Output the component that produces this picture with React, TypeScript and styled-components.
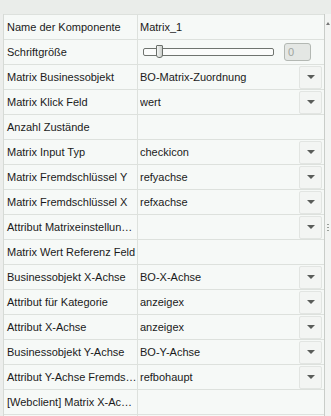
import styled, { createGlobalStyle } from 'styled-components';

const GlobalStyle = createGlobalStyle`
  html, body {
    margin: 0;
    padding: 0;
    background: #eceeec;
    overflow: hidden;
  }
  body {
    font-family: "Liberation Sans", Arial, sans-serif;
    font-size: 11px;
    color: #1a1a1a;
  }
`;

type Row = {
  label: string;
  value?: string;
  kind?: 'text' | 'select' | 'slider' | 'empty';
};

const rows: Row[] = [
  { label: 'Name der Komponente', value: 'Matrix_1', kind: 'text' },
  { label: 'Schriftgröße', kind: 'slider' },
  { label: 'Matrix Businessobjekt', value: 'BO-Matrix-Zuordnung', kind: 'select' },
  { label: 'Matrix Klick Feld', value: 'wert', kind: 'select' },
  { label: 'Anzahl Zustände', kind: 'empty' },
  { label: 'Matrix Input Typ', value: 'checkicon', kind: 'select' },
  { label: 'Matrix Fremdschlüssel Y', value: 'refyachse', kind: 'select' },
  { label: 'Matrix Fremdschlüssel X', value: 'refxachse', kind: 'select' },
  { label: 'Attribut Matrixeinstellun…', value: '', kind: 'select' },
  { label: 'Matrix Wert Referenz Feld', kind: 'empty' },
  { label: 'Businessobjekt X-Achse', value: 'BO-X-Achse', kind: 'select' },
  { label: 'Attribut für Kategorie', value: 'anzeigex', kind: 'select' },
  { label: 'Attribut X-Achse', value: 'anzeigex', kind: 'select' },
  { label: 'Businessobjekt Y-Achse', value: 'BO-Y-Achse', kind: 'select' },
  { label: 'Attribut Y-Achse Fremds…', value: 'refbohaupt', kind: 'select' },
  { label: '[Webclient] Matrix X-Ac…', kind: 'empty' },
  { label: '', kind: 'empty' },
];

const Page = styled.div`
  display: flex;
  width: 331px;
  height: 416px;
  overflow: hidden;
`;

const Main = styled.div`
  flex: 1;
  display: flex;
  flex-direction: column;
`;

const TopBand = styled.div`
  height: 14px;
  flex: none;
  background: #eaedea;
`;

const Table = styled.div`
  margin-left: 3px;
  border-left: 1px solid #d6dad6;
  background: #f6f9f7;
`;

const PropRow = styled.div`
  display: grid;
  grid-template-columns: 134px 1fr;
  height: 25px;
  border-top: 1px solid #dde1dd;
  box-sizing: border-box;
`;

const Label = styled.div`
  display: flex;
  align-items: center;
  padding-left: 3px;
  border-right: 1px solid #dde1dd;
  white-space: nowrap;
  overflow: hidden;
  min-width: 0;
`;

const Value = styled.div`
  display: flex;
  align-items: center;
  padding-left: 2px;
  padding-right: 2px;
  min-width: 0;
  gap: 4px;
`;

const ValueText = styled.span`
  flex: 1;
  white-space: nowrap;
  overflow: hidden;
`;

const DropButton = styled.div`
  flex: none;
  width: 21px;
  height: 21px;
  display: flex;
  align-items: center;
  justify-content: center;
  background: #f3f5f3;
  border: 1px solid #e2e5e2;
  border-radius: 2px;
`;

const Arrow = styled.div`
  width: 0;
  height: 0;
  border-left: 4px solid transparent;
  border-right: 4px solid transparent;
  border-top: 4px solid #5a5d5a;
`;

const SliderWrap = styled.div`
  flex: 1;
  display: flex;
  align-items: center;
  padding-left: 3px;
  gap: 10px;
`;

const Track = styled.div`
  position: relative;
  width: 129px;
  height: 6px;
  border: 1px solid #6f746f;
  border-radius: 2px;
  background: #fbfcfb;
`;

const Thumb = styled.div`
  position: absolute;
  left: 12px;
  top: -4px;
  width: 5px;
  height: 11px;
  border: 1px solid #6a6f6a;
  border-radius: 1px 1px 3px 3px;
  background: linear-gradient(to right, #f4f6f4, #c9cdc9);
`;

const NumBox = styled.div`
  width: 27px;
  height: 18px;
  box-sizing: border-box;
  border: 1px solid #b3b8b3;
  border-radius: 3px;
  background: #e4e7e4;
  color: #a0a5a0;
  padding-left: 3px;
  display: flex;
  align-items: center;
`;

const ScrollBar = styled.div`
  width: 7px;
  flex: none;
  display: flex;
  flex-direction: column;
  background: #eaedea;
`;

const ScrollTrack = styled.div`
  flex: 1;
  margin-top: 14px;
  border-left: 1px solid #c9cdc9;
  background: #f2f4f2;
  position: relative;
`;

const UpArrow = styled.div`
  position: absolute;
  top: 8px;
  left: 1px;
  width: 0;
  height: 0;
  border-left: 2px solid transparent;
  border-right: 2px solid transparent;
  border-bottom: 3px solid #777;
`;

const Grip = styled.div`
  position: absolute;
  top: 210px;
  left: 2px;
  width: 2px;
  height: 9px;
  background: repeating-linear-gradient(to bottom, #9a9f9a 0 1px, transparent 1px 3px);
`;

function ValueCell({ row }: { row: Row }) {
  if (row.kind === 'slider') {
    return (
      <Value>
        <SliderWrap>
          <Track>
            <Thumb />
          </Track>
          <NumBox>0</NumBox>
        </SliderWrap>
      </Value>
    );
  }
  return (
    <Value>
      <ValueText>{row.value}</ValueText>
      {row.kind === 'select' && (
        <DropButton>
          <Arrow />
        </DropButton>
      )}
    </Value>
  );
}

export default function App() {
  return (
    <Page>
      <GlobalStyle />
      <Main>
        <TopBand />
        <Table>
          {rows.map((row, i) => (
            <PropRow key={i}>
              <Label>{row.label}</Label>
              <ValueCell row={row} />
            </PropRow>
          ))}
        </Table>
      </Main>
      <ScrollBar>
        <ScrollTrack>
          <UpArrow />
          <Grip />
        </ScrollTrack>
      </ScrollBar>
    </Page>
  );
}
